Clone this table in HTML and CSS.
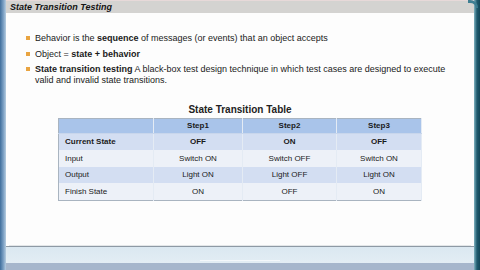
FILE: index.html
```html
<!DOCTYPE html>
<html>
<head>
<meta charset="utf-8">
<link rel="stylesheet" href="styles.css">
</head>
<body>
<div class="window">
  <div class="lborder"></div>
  <div class="main">
    <div class="titlebar"><span class="title">State Transition Testing</span></div>
    <div class="content">
      <ul class="bullets">
        <li>Behavior is the <b>sequence</b> of messages (or events) that an object accepts</li>
        <li>Object = <b>state + behavior</b></li>
        <li><b>State transition testing</b> <span>A black-box test design technique in which test cases are designed to execute</span><br><span>valid and invalid state transitions.</span></li>
      </ul>
      <div class="tablewrap">
        <div class="tabletitle">State Transition Table</div>
        <table class="stt">
          <tr class="head"><th></th><th>Step1</th><th>Step2</th><th>Step3</th></tr>
          <tr class="r1"><th class="rowh">Current State</th><td class="bold">OFF</td><td class="bold">ON</td><td class="bold">OFF</td></tr>
          <tr class="r2"><th class="rowh n">Input</th><td>Switch ON</td><td>Switch OFF</td><td>Switch ON</td></tr>
          <tr class="r1"><th class="rowh n">Output</th><td>Light ON</td><td>Light OFF</td><td>Light ON</td></tr>
          <tr class="r2"><th class="rowh n">Finish State</th><td>ON</td><td>OFF</td><td>ON</td></tr>
        </table>
      </div>
    </div>
    <div class="footer">
      <div class="fband"><div class="grip"></div></div>
      <div class="fdark"></div>
    </div>
  </div>
  <div class="rborder"><div class="corner"></div></div>
</div>
</body>
</html>
```
FILE: styles.css
```css
* { box-sizing: border-box; }
html, body { margin: 0; padding: 0; }
body { width: 480px; height: 270px; overflow: hidden; font-family: "Liberation Sans", Arial, sans-serif; color: #111; background: #fff; }
.window { display: flex; width: 480px; height: 270px; }
.lborder { width: 6px; background: linear-gradient(to right, #3f6e9c, #7fa3c6 60%, #b7cde0); }
.rborder { width: 6px; background: linear-gradient(to right, #7fb2c0, #1f5a6e 50%, #134658); position: relative; }
.corner { position: absolute; left: -6px; top: 0; width: 10px; height: 8px; border-top-right-radius: 8px; border-top: 3px solid #3e7e92; border-right: 2px solid #3e7e92; }
.main { flex: 1; display: flex; flex-direction: column; background: #fdfdfd; }
.titlebar { height: 13px; background: #d4d3d1; border-top: 1px solid #e7d9d9; display: flex; align-items: center; padding-left: 4px; }
.title { font-weight: bold; font-style: italic; font-size: 9px; color: #141414; }
.content { flex: 1; padding-top: 20px; }
.bullets { list-style: none; margin: 0; padding: 0 0 0 29px; font-size: 9px; line-height: 10.5px; color: #1a1a1a; }
.bullets li { position: relative; margin-bottom: 5px; padding-right: 12px; }
.bullets li:last-child { margin-bottom: 0; }
.bullets li::before { content: ""; position: absolute; left: -9px; top: 3px; width: 4px; height: 4px; background: #e9a441; }
.tablewrap { display: flex; flex-direction: column; align-items: center; margin-top: 19px; }
.tabletitle { font-weight: bold; font-size: 10px; line-height: 11.5px; color: #222; margin-bottom: 2px; }
.stt { border-collapse: collapse; width: 364px; font-size: 8px; color: #1a1a1a; border: 1px solid #a9b4c0; }
.stt td, .stt th { height: 16.75px; padding: 0; text-align: center; border-right: 1px solid #e4ebf4; }
.stt th.rowh { text-align: left; padding-left: 6px; width: 95px; }
.stt .n { font-weight: normal; }
.stt .bold { font-weight: bold; }
.head { background: #a9c4ea; }
.head th { height: 15px; border-bottom: 1px solid #c8d6ec; }
.head th:nth-child(2) { width: 89px; }
.head th:nth-child(3) { width: 94px; }
.r1 { background: #d3def2; }
.r2 { background: #edf1f8; }
.footer { height: 24px; display: flex; flex-direction: column; }
.fband { flex: 1; background: linear-gradient(#dbe8f1, #e3edf4); border-top: 1px solid #8e9aa5; box-shadow: 0 -4px 0 -3px #e3e6e8; position: relative; }
.grip { position: absolute; left: 194px; bottom: 0; width: 80px; height: 3px; border-top: 1px solid #f4f8fb; }
.fdark { height: 7px; background: #a6b6cc; }
```
